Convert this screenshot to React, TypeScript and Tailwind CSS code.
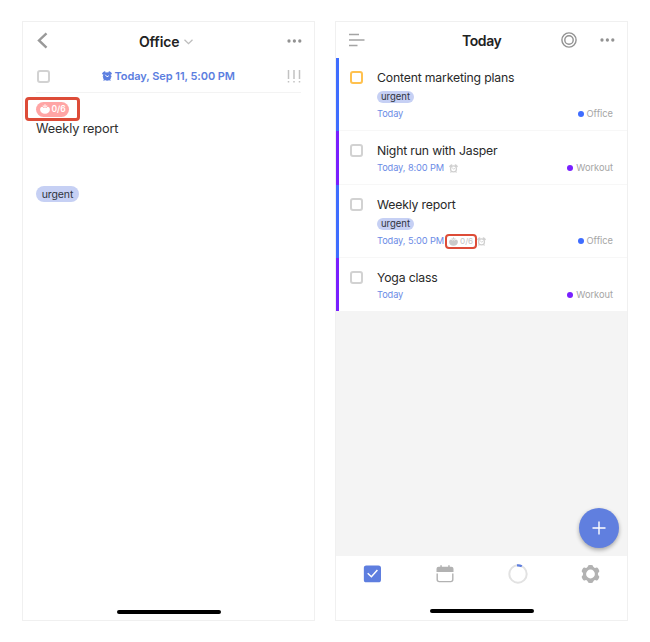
import React from "react";

type Task = {
  title: string;
  tag?: string;
  date: string;
  list: "Office" | "Workout";
  highlighted?: boolean;
  pomo?: string;
  alarm?: boolean;
  height: string;
};

const tasks: Task[] = [
  { title: "Content marketing plans", tag: "urgent", date: "Today", list: "Office", highlighted: true, height: "h-[73px]" },
  { title: "Night run with Jasper", date: "Today, 8:00 PM", list: "Workout", alarm: true, height: "h-[54px]" },
  { title: "Weekly report", tag: "urgent", date: "Today, 5:00 PM", list: "Office", pomo: "0/6", alarm: true, height: "h-[73px]" },
  { title: "Yoga class", date: "Today", list: "Workout", height: "h-[53px]" },
];

function AlarmIcon({ className, solid = false }: { className: string; solid?: boolean }) {
  return (
    <svg viewBox="0 0 20 20" className={className} fill="none" stroke="currentColor" strokeLinecap="round">
      <circle cx="10" cy="11" r={solid ? 7.6 : 6.6} strokeWidth={solid ? 1.6 : 2.8} fill={solid ? "currentColor" : "none"} />
      <path d="M2.4 5.2 5.4 2.6M17.6 5.2 14.6 2.6" strokeWidth="4" />
      <path d="M5 17 4 18.4M15 17l1 1.4" strokeWidth="2.4" />
      <path d="M7 8l3 3.6 3-1.8" strokeWidth="1.9" stroke={solid ? "#ffffff" : "currentColor"} />
    </svg>
  );
}

function TomatoIcon({ className }: { className: string }) {
  return (
    <svg viewBox="0 0 20 20" className={className} fill="currentColor">
      <path d="M5.2 5.4C2.2 5.2 .2 7.8 .2 11c0 5.2 4.2 8.6 9.8 8.6s9.8-3.4 9.8-8.6c0-3.2-2-5.8-5-5.6L12.8 7.8 10 6.6 7.2 7.8z" />
      <path d="M9 .6h2l-.2 2.8 4.4-.2-2.7 3L10 5.2 7.5 6.2 4.8 3.2l4.4.2z" />
    </svg>
  );
}

function Dots({ className }: { className: string }) {
  return (
    <svg width="15" height="4" viewBox="0 0 15 4" className={className} fill="currentColor">
      <circle cx="2" cy="2" r="1.65" />
      <circle cx="7.4" cy="2" r="1.65" />
      <circle cx="12.8" cy="2" r="1.65" />
    </svg>
  );
}

function DetailScreen() {
  return (
    <section className="flex h-[600px] w-[293px] shrink-0 flex-col border border-[#f0f0f0] bg-white">
      <header className="grid h-[38px] grid-cols-[60px_1fr_60px] items-center pl-[14px] pr-[12px]">
        <svg width="11" height="17" viewBox="0 0 11 17" className="-translate-y-px" fill="none" stroke="#999999" strokeWidth="2.4">
          <path d="M9.5 1.3 2 8.4l7.5 7.2" />
        </svg>
        <div className="flex items-center pl-[42px] pt-[2px]">
          <h1 className="whitespace-nowrap text-[14px] font-semibold leading-[20px] tracking-[-0.15px] text-[#222222]">Office</h1>
          <svg width="9" height="6" viewBox="0 0 9 6" className="ml-[5px] shrink-0" fill="none" stroke="#bdbdbd" strokeWidth="1.3">
            <path d="M.5.8 4.5 4.7 8.5.8" />
          </svg>
        </div>
        <Dots className="justify-self-end text-[#929292]" />
      </header>

      <div className="mx-[13px] flex h-[33px] items-center border-b border-[#f3f3f3]">
        <span className="ml-[1px] h-[13px] w-[13px] rounded-[3px] border-2 border-[#d2d2d2]" />
        <div className="ml-[52px] flex items-center text-[#5b7ee0]">
          <AlarmIcon className="h-[10px] w-[10px]" solid />
          <span className="ml-[2.5px] whitespace-nowrap text-[11px] font-semibold leading-[14px] tracking-[-0.06px]">Today, Sep 11, 5:00 PM</span>
        </div>
        <svg width="14" height="13" viewBox="0 0 14 13" className="ml-auto" stroke="#c2c2c2" strokeWidth="1.5">
          <path d="M1.5 0v9M7 0v9M12.5 0v9M1.5 11v1.5M7 11v1.5M12.5 11v1.5" />
        </svg>
      </div>

      <div className="ml-[2px] mt-[4px] flex h-[24px] w-[55px] items-center rounded-[4px] border-[3px] border-[#dd4c38] pl-[8px]">
        <div className="flex h-[15px] w-[33px] items-center rounded-full bg-[#ffa5a5] pl-[3.5px] text-white">
          <TomatoIcon className="h-[10px] w-[10px]" />
          <span className="ml-[2px] whitespace-nowrap text-[8.5px] font-semibold leading-[10px]">0/6</span>
        </div>
      </div>

      <p className="ml-[13px] whitespace-nowrap text-[12.75px] leading-[16px] tracking-[-0.15px] text-[#303030]">Weekly report</p>
      <span className="ml-[13px] mt-[49px] flex h-[16px] w-[43px] items-center justify-center rounded-full bg-[#c6d0f4] text-[10.5px] leading-[13px] tracking-[-0.1px] text-[#30333c]">urgent</span>
      <div className="mb-[6px] mt-auto h-[4px] w-[104px] self-center rounded-full bg-black" />
    </section>
  );
}

function TaskRow({ task, last }: { task: Task; last: boolean }) {
  return (
    <li className={`flex bg-white ${task.height}`}>
      <span className={`w-[3px] shrink-0 ${task.list === "Office" ? "bg-[#3f6dff]" : "bg-[#7920ff]"}`} />
      <div className={`flex flex-1 pl-[11px] pr-[14px] ${last ? "" : "border-b border-[#f7f7f7]"}`}>
        <span className={`h-[13px] w-[13px] shrink-0 rounded-[3px] border-2 ${task.highlighted ? "mt-[12.5px] border-[#ffc14f]" : "mt-[13px] border-[#d2d2d2]"}`} />
        <div className="ml-[14px] flex flex-1 flex-col pt-[11px]">
          <p className="whitespace-nowrap text-[12.25px] leading-[18px] tracking-[-0.18px] text-[#292929]">{task.title}</p>
          {task.tag && (
            <span className="mb-[3px] mt-[4px] flex h-[12px] w-[37px] items-center justify-center rounded-full bg-[#c6d0f4] text-[9.5px] leading-[12px] text-[#30333c]">{task.tag}</span>
          )}
          <div className="mt-[2px] flex h-[12px] items-center text-[9.25px] leading-[12px]">
            <span className="whitespace-nowrap tracking-[-0.1px] text-[#6c8be6]">{task.date}</span>
            {task.pomo && (
              <span className="-my-[2px] ml-[1px] flex h-[15px] w-[32px] items-center rounded-[4px] border-2 border-[#dd4c38] pl-[2px] text-[#cacaca]">
                <TomatoIcon className="h-[9px] w-[9px]" />
                <span className="ml-[2px] text-[8px] font-medium">{task.pomo}</span>
              </span>
            )}
            {task.alarm && <AlarmIcon className={`h-[9px] w-[9px] text-[#d0d0d0] ${task.pomo ? "" : "ml-[5px]"}`} />}
            <span className="ml-auto flex items-center gap-[3px] whitespace-nowrap text-[#a5a5a5]">
              <i className={`h-[6px] w-[6px] rounded-full ${task.list === "Office" ? "bg-[#3f6dff]" : "bg-[#7920ff]"}`} />
              {task.list}
            </span>
          </div>
        </div>
      </div>
    </li>
  );
}

function TodayScreen() {
  return (
    <section className="flex h-[600px] w-[293px] shrink-0 flex-col border border-[#f0f0f0] bg-white">
      <header className="flex h-[36px] items-center pl-[12px] pr-[12px]">
        <svg width="17" height="14" viewBox="0 0 17 14" stroke="#a4a4a4" strokeWidth="1.4">
          <path d="M1 1.5h10M1 7h15.5M1 12.5h8.5" />
        </svg>
        <h1 className="ml-[97px] mt-[2px] text-[14px] font-semibold leading-[20px] tracking-[-0.4px] text-[#222222]">Today</h1>
        <div className="ml-auto flex items-center">
          <svg width="16" height="16" viewBox="0 0 16 16" className="mr-[23px]" fill="none" stroke="#929292" strokeWidth="1.4">
            <circle cx="8" cy="8" r="7.1" />
            <circle cx="8" cy="8" r="4.2" />
          </svg>
          <Dots className="text-[#929292]" />
        </div>
      </header>
      <ul>
        {tasks.map((task, index) => (
          <TaskRow key={task.title} task={task} last={index === tasks.length - 1} />
        ))}
      </ul>
      <main className="flex flex-1 items-end justify-end bg-[#f4f4f4] pb-[8px] pr-[8px]">
        <button aria-label="Add task" className="flex h-[40px] w-[40px] items-center justify-center rounded-full bg-[#607fdf] shadow-[0_2px_4px_rgba(0,0,0,0.32)]">
          <svg width="14" height="14" viewBox="0 0 14 14" stroke="white" strokeWidth="1.4">
            <path d="M7 .5v13M.5 7h13" />
          </svg>
        </button>
      </main>
      <footer className="flex h-[64px] flex-col items-center">
        <nav className="grid h-[36px] w-full grid-cols-4 items-center justify-items-center">
          <svg width="18" height="18" viewBox="0 0 18 18" className="translate-x-[0.5px]">
            <rect x=".2" y=".5" width="17.3" height="16.8" rx="2.6" fill="#5e7edf" />
            <path d="m4.2 8.2 3.7 3.5 6-6.6" fill="none" stroke="white" strokeWidth="1.5" />
          </svg>
          <svg width="18" height="18" viewBox="0 0 18 18" fill="#b2b2b2">
            <path d="M.5 7V3.8Q.5 1.7 2.6 1.7h1.7V.3h1.5v1.4h6.4V.3h1.5v1.4h1.7q2.1 0 2.1 2.1V7z" />
            <path d="M1.2 8.5v6.1q0 2 2 2h11.6q2 0 2-2V8.5" fill="none" stroke="#b2b2b2" strokeWidth="1.4" />
          </svg>
          <svg width="20" height="20" viewBox="0 0 20 20" fill="none" strokeWidth="2">
            <circle cx="10" cy="10" r="8.7" stroke="#e2e2e2" />
            <path d="M9 1.35a8.7 8.7 0 0 1 4.8 .9" stroke="#5e7edf" strokeWidth="2.3" />
          </svg>
          <svg width="18" height="18" viewBox="0 0 18 18" className="-translate-x-[0.5px]">
            <g fill="#b2b2b2">
              <circle cx="9" cy="9" r="7.6" />
              <rect x="6.2" y="0" width="5.6" height="18" rx="1.8" />
              <rect x="6.2" y="-.4" width="5.6" height="18.8" rx="1.8" transform="rotate(60 9 9)" />
              <rect x="6.2" y="-.4" width="5.6" height="18.8" rx="1.8" transform="rotate(120 9 9)" />
            </g>
            <circle cx="9" cy="9" r="4.4" fill="white" />
          </svg>
        </nav>
        <div className="mt-[17px] h-[4px] w-[104px] rounded-full bg-black" />
      </footer>
    </section>
  );
}

export default function App() {
  return (
    <div className="flex h-[642px] w-[650px] gap-[20px] overflow-hidden bg-white pl-[22px] pt-[21px] font-['Inter','Liberation_Sans',sans-serif]">
      <DetailScreen />
      <TodayScreen />
    </div>
  );
}
